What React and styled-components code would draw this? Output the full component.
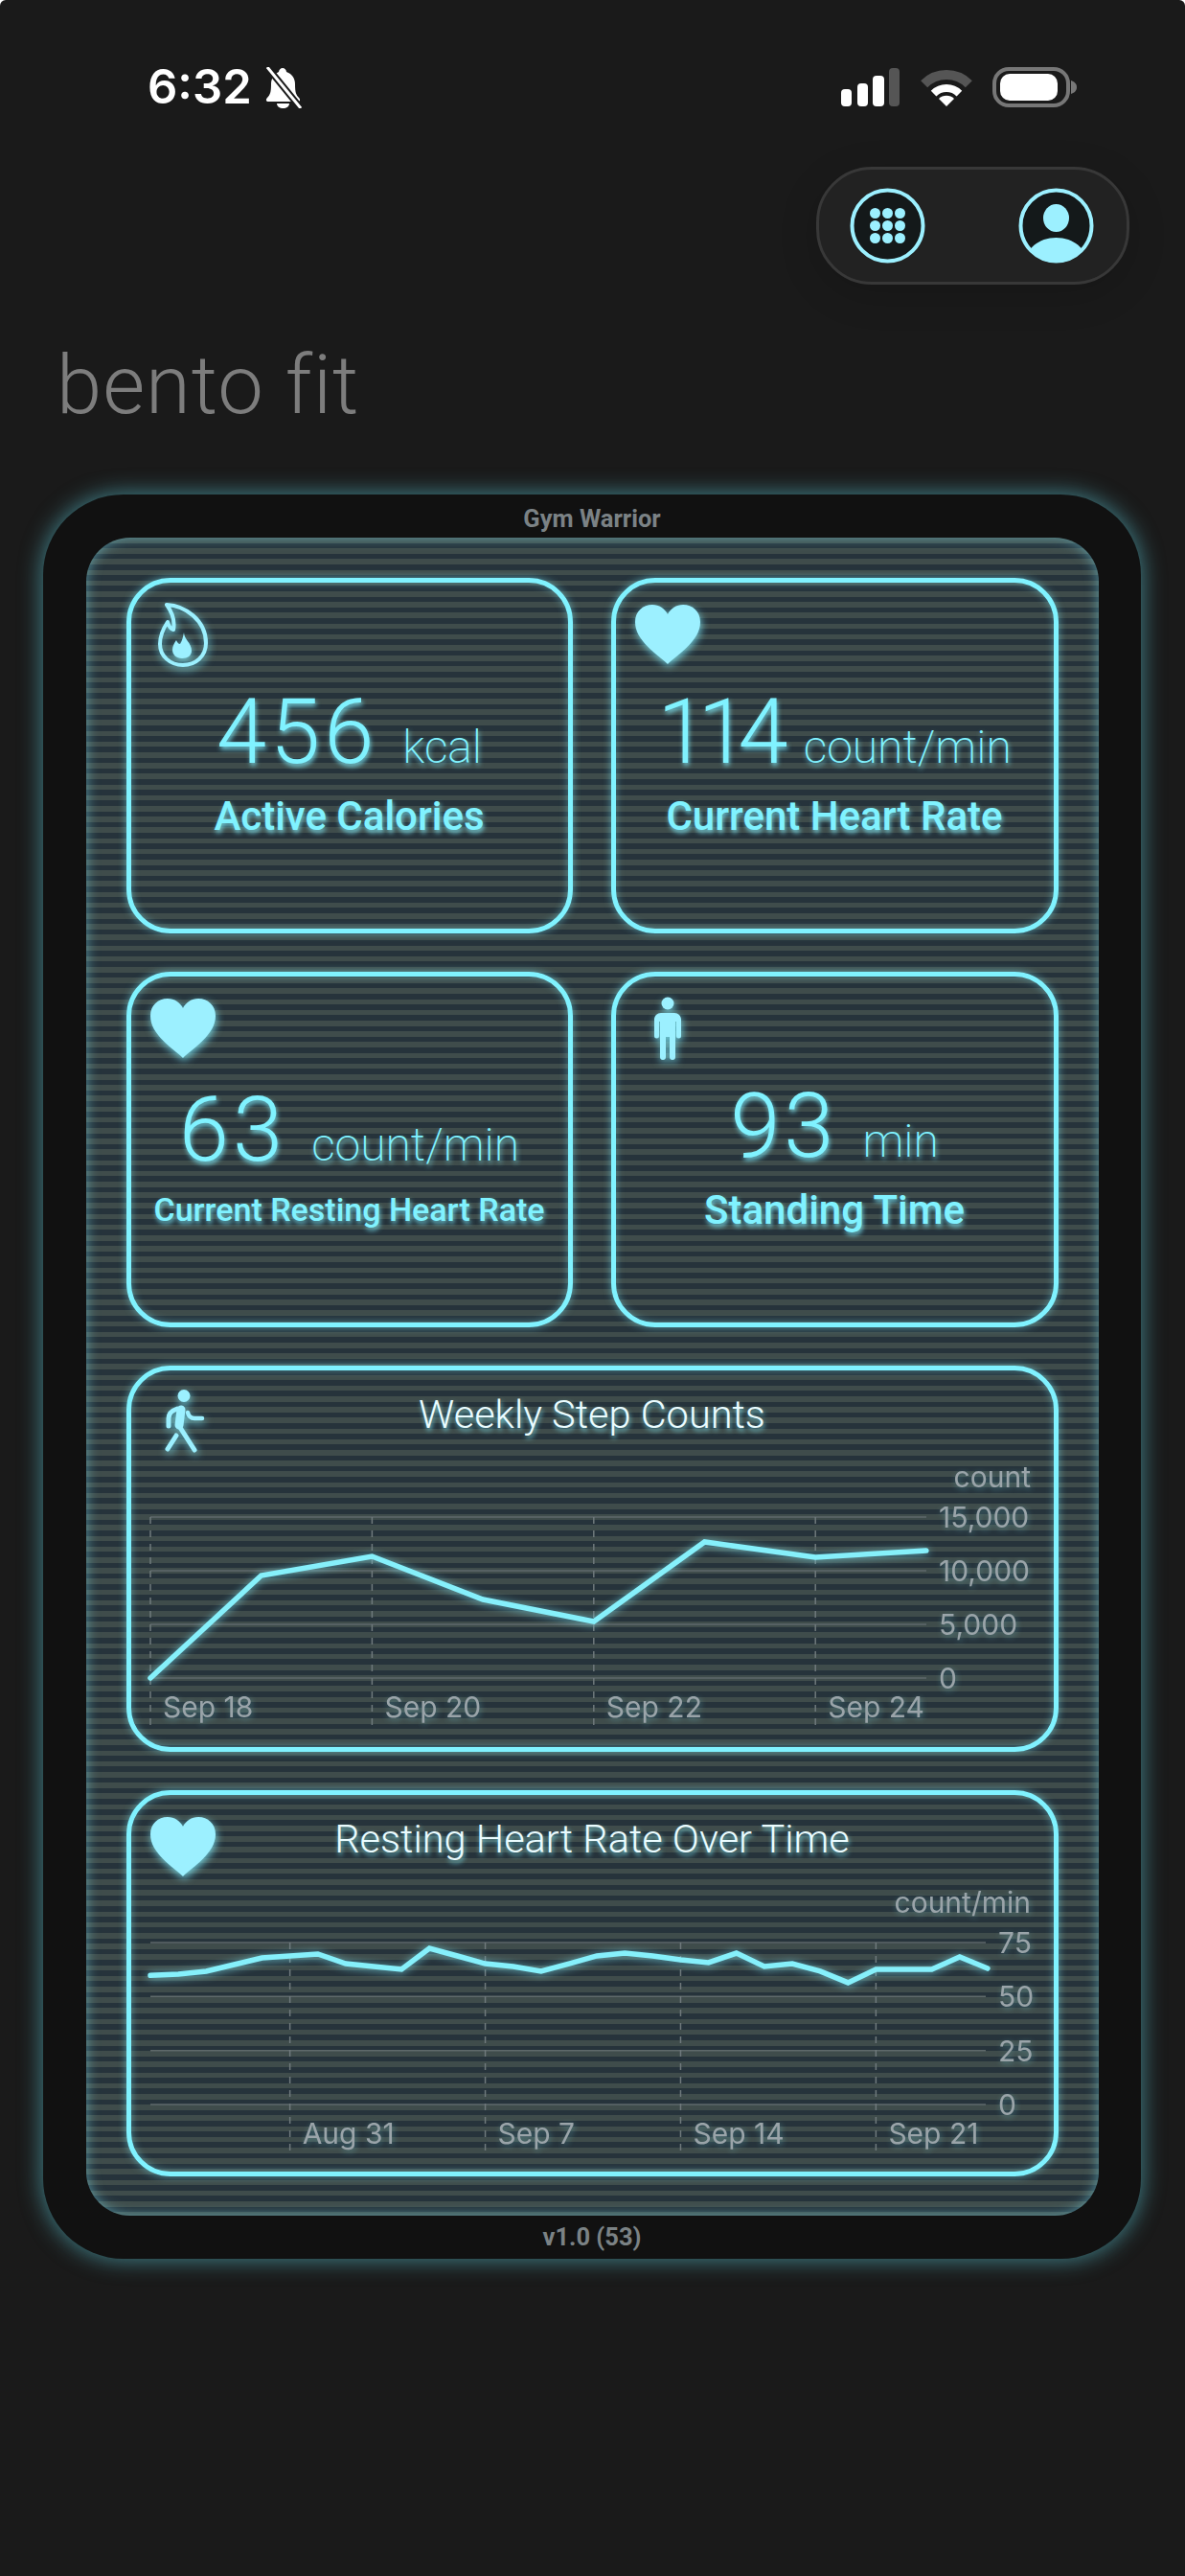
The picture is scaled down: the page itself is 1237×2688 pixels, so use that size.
import React from 'react'
import styled, { createGlobalStyle } from 'styled-components'

const CYAN = '#80f2ff'
const ICON = '#9cf0ff'
const GLOW = 'rgba(128, 240, 255, 0.8)'

const Global = createGlobalStyle`
  html, body { margin: 0; padding: 0; background: #fff; }
  body { font-family: Roboto, "Liberation Sans", sans-serif; }
`

const Page = styled.div`
  width: 1237px;
  height: 2688px;
  background: #1a1a1a;
  border-radius: 6px 6px 0 0;
  display: flex;
  flex-direction: column;
  overflow: hidden;
`

const StatusBar = styled.div`
  display: flex;
  align-items: center;
  justify-content: space-between;
  height: 44px;
  margin-top: 69px;
  padding: 0 113px 0 154px;
`

const TimeGroup = styled.div`
  display: flex;
  align-items: center;
  gap: 11px;
`

const Clock = styled.span`
  font-family: Inter, sans-serif;
  font-size: 49px;
  font-weight: 600;
  line-height: 44px;
  color: #fff;
`

const StatusIcons = styled.div`
  display: flex;
  align-items: center;
  gap: 21px;
`

const NavPill = styled.div`
  align-self: flex-end;
  box-sizing: border-box;
  display: flex;
  align-items: center;
  justify-content: space-between;
  width: 327px;
  height: 123px;
  margin: 61px 58px 0 0;
  padding: 0 34px 0 32px;
  background: #222;
  border: 3px solid #383838;
  border-radius: 58px;
  box-shadow: 0 10px 40px rgba(0, 0, 0, 0.15);
`

const Brand = styled.h1`
  margin: 55px 0 0 59px;
  font-size: 85px;
  font-weight: 300;
  letter-spacing: 1px;
  line-height: 100px;
  color: #7d7d7d;
`

const Frame = styled.div`
  box-sizing: border-box;
  display: flex;
  flex-direction: column;
  align-items: center;
  width: 1146px;
  height: 1841px;
  margin: 64px 0 0 45px;
  background: #111;
  border-radius: 84px;
  box-shadow: 0 0 22px 2px rgba(100, 220, 235, 0.5);
`

const FrameText = styled.div`
  height: 45px;
  font-size: 25.5px;
  font-weight: 700;
  line-height: ${(p) => p.$line}px;
  color: #7b8285;
`

const Screen = styled.div`
  box-sizing: border-box;
  display: grid;
  grid-template-columns: 466px 467px;
  grid-auto-rows: min-content;
  gap: 40px;
  width: 1057px;
  height: 1751px;
  padding: 42px;
  border-radius: 46px;
  background: repeating-linear-gradient(
    to bottom,
    #3f4c4b 0,
    #3f4c4b 5.6px,
    #26333b 5.6px,
    #26333b 11.2px
  );
  box-shadow: inset 0 0 14px rgba(130, 235, 250, 0.55);
`

const Panel = styled.section`
  position: relative;
  box-sizing: border-box;
  border: 5px solid ${CYAN};
  border-radius: 46px;
  box-shadow: 0 0 8px rgba(128, 240, 255, 0.55), inset 0 0 8px rgba(128, 240, 255, 0.45);
`

const StatCard = styled(Panel)`
  display: flex;
  flex-direction: column;
  align-items: center;
  height: 371px;
  padding-top: ${(p) => p.$top}px;
`

const ChartCard = styled(Panel)`
  grid-column: 1 / 3;
  height: 403px;
  padding-top: 26px;
  text-align: center;
`

const CardIcon = styled.svg`
  position: absolute;
  left: ${(p) => p.$left}px;
  top: ${(p) => p.$top}px;
  filter: drop-shadow(1px 3px 4px ${GLOW});
`

const ValueRow = styled.div`
  display: flex;
  align-items: baseline;
  justify-content: center;
  gap: 26px;
  color: ${CYAN};
  text-shadow: 1px 3px 5px ${GLOW};
`

const Value = styled.span`
  font-size: 94px;
  font-weight: 300;
  letter-spacing: ${(p) => p.$spacing ?? 4}px;
  line-height: 94px;
`

const Unit = styled.span`
  font-size: 48px;
  font-weight: 200;
  line-height: 48px;
`

const StatLabel = styled.div`
  margin-top: ${(p) => p.$gap}px;
  font-size: ${(p) => p.$size}px;
  font-weight: 500;
  line-height: 1;
  color: ${CYAN};
  text-shadow: 1px 3px 5px ${GLOW};
`

const ChartTitle = styled.h2`
  margin: 0;
  font-size: 41.5px;
  font-weight: 300;
  line-height: 40px;
  color: #eafcff;
  text-shadow: 1px 3px 5px ${GLOW};
`

const ChartSvg = styled.svg`
  display: block;
  margin: 27px 0 0 1px;
`

const GridLine = styled.line`
  stroke: #5f696b;
  stroke-width: 1.5;
`

const DashLine = styled.line`
  stroke: #6f797c;
  stroke-width: 1.5;
  stroke-dasharray: 7 7;
`

const DataLine = styled.polyline`
  fill: none;
  stroke: #86f0fb;
  stroke-width: 5.5;
  stroke-linecap: round;
  stroke-linejoin: miter;
  filter: drop-shadow(0 1px 4px rgba(128, 240, 255, 0.7));
`

const AxisText = styled.text`
  font-family: Inter, sans-serif;
  font-size: 30px;
  fill: #9aa4a9;
  filter: drop-shadow(1px 2px 3px rgba(128, 240, 255, 0.35));
`

const BellOff = () => (
  <svg width="43" height="43" viewBox="0 0 43 43">
    <path fill="#fff" d="M21 1c2 0 4 2 4 4 6 2 9 7 9 13 0 8 1 11 4 14 2 2 1 4-1 4H6c-2 0-3-2-1-4 3-3 4-6 4-14 0-6 3-11 8-13 0-2 2-4 4-4z" />
    <path fill="#fff" d="M15 38h13c0 3-3 5-6.500 5S15 41 15 38z" />
    <path stroke="#1a1a1a" strokeWidth="7" d="M5 0l35 43" />
    <path stroke="#fff" strokeWidth="3" d="M5 0l35 43" />
  </svg>
)

const Signal = () => (
  <svg width="62" height="40" viewBox="0 0 62 40">
    <rect x="0" y="22" width="11" height="18" rx="4" fill="#fff" />
    <rect x="17" y="16" width="11" height="24" rx="4" fill="#fff" />
    <rect x="33" y="8" width="12" height="32" rx="4" fill="#fff" />
    <rect x="50" y="0" width="11" height="40" rx="4" fill="#555" />
  </svg>
)

const Wifi = () => (
  <svg width="54" height="40" viewBox="0 0 54 40">
    <path fill="none" stroke="#555" strokeWidth="10" d="M3.700 16.700A33 33 0 0 1 50.300 16.700" />
    <path fill="none" stroke="#fff" strokeWidth="8" d="M13.600 26.600A19 19 0 0 1 40.400 26.600" />
    <path fill="#fff" d="M27 40L19 32A11.300 11.300 0 0 1 35 32Z" />
  </svg>
)

const Battery = () => (
  <svg width="88" height="42" viewBox="0 0 88 42">
    <rect x="2" y="2" width="77" height="38" rx="15" fill="none" stroke="#777" strokeWidth="4" />
    <rect x="8" y="7" width="60" height="28" rx="10" fill="#fff" />
    <path fill="#777" d="M82 14c3 1 6 3 6 7s-3 6-6 7z" />
  </svg>
)

const GridButton = () => (
  <svg width="79" height="79" viewBox="0 0 79 79">
    <circle cx="39.500" cy="39.500" r="37" fill="#14191a" stroke={ICON} strokeWidth="4" />
    {[26.500, 39.500, 52.500].flatMap((y) =>
      [26.500, 39.500, 52.500].map((x) => (
        <circle key={`${x}-${y}`} cx={x} cy={y} r="5.500" fill={ICON} />
      ))
    )}
  </svg>
)

const ProfileButton = () => (
  <svg width="79" height="79" viewBox="0 0 79 79">
    <circle cx="39.500" cy="39.500" r="37" fill="#14191a" stroke={ICON} strokeWidth="4" />
    <ellipse cx="39.500" cy="31.500" rx="13.500" ry="14.500" fill={ICON} />
    <path fill={ICON} d="M12 65C17 57 28 52 39.500 52C51 52 62 57 67 65C60 74 50 78 39.500 78C29 78 19 74 12 65Z" />
  </svg>
)

const Flame = () => (
  <CardIcon $left={28} $top={21} width="52" height="67" viewBox="0 0 52 67">
    <path fill="none" stroke={ICON} strokeWidth="4" strokeLinejoin="round" d="M9 2C28 3 50 18 50 42C50 56 39 65 26 65C13 65 2 56 2 43C2 33 6 26 10 20C11 24 13 27 16 28C18 18 14 9 9 2Z" />
    <path fill={ICON} d="M27 31C27 38 35 42 35 50C35 55 31 58 25 58C19 58 15 54 15 49C15 45 17 42 19 39C20 41 21 43 23 43C25 40 26 36 27 31Z" />
  </CardIcon>
)

const Heart = () => (
  <CardIcon $left={20} $top={23} width="68" height="62" viewBox="0 0 68 62">
    <path fill={ICON} d="M34 62C24 52 0 38 0 18C0 7 8 0 18 0C25 0 31 4 34 10C37 4 43 0 50 0C60 0 68 7 68 18C68 38 44 52 34 62Z" />
  </CardIcon>
)

const Standing = () => (
  <CardIcon $left={40} $top={21} width="28" height="66" viewBox="0 0 28 66">
    <circle cx="14" cy="7" r="6.500" fill={ICON} />
    <path fill={ICON} d="M7 17H21C25 17 28 20 28 24V41A2.500 2.500 0 0 1 23 41V26H22V63A3 3 0 0 1 16 63V42H12V63A3 3 0 0 1 6 63V26H5V41A2.500 2.500 0 0 1 0 41V24C0 20 3 17 7 17Z" />
  </CardIcon>
)

const Walking = () => (
  <CardIcon $left={35} $top={20} width="42" height="67" viewBox="0 0 42 67">
    <circle cx="20" cy="6.500" r="6.500" fill={ICON} />
    <g fill="none" stroke={ICON} strokeLinecap="round" strokeLinejoin="round">
      <path strokeWidth="9" d="M17 21L15 37" />
      <path strokeWidth="5" d="M13 20C7 22 4 26 4 30V38" />
      <path strokeWidth="4.500" d="M24 24C25 28 27 30 31 30H39" />
      <path strokeWidth="5" d="M15 38L31 63" />
      <path strokeWidth="5" d="M12 48L3 62" />
    </g>
  </CardIcon>
)

const Chart = ({ data, yMax, ticks, xTicks, unit, plot, step }) => {
  const { left, right, top, bottom, labelX } = plot
  const y = (v) => bottom - (v / yMax) * (bottom - top)
  const x = (i) => left + i * step
  return (
    <ChartSvg width="961" height="292" viewBox="0 0 961 292">
      <AxisText x="938" y={top - 31} textAnchor="end">{unit}</AxisText>
      {ticks.map((t) => (
        <g key={t}>
          <GridLine x1={left} x2={right} y1={y(t)} y2={y(t)} />
          <AxisText x={labelX} y={y(t) + 11}>{t.toLocaleString('en-US')}</AxisText>
        </g>
      ))}
      {xTicks.map(([i, label]) => (
        <g key={label}>
          <DashLine x1={x(i)} x2={x(i)} y1={top} y2={278} />
          <AxisText x={x(i) + 13} y={bottom + 41}>{label}</AxisText>
        </g>
      ))}
      <DataLine points={data.map((v, i) => `${x(i)},${y(v)}`).join(' ')} />
    </ChartSvg>
  )
}

const STEPS = [0, 9554, 11339, 7321, 5268, 12679, 11250, 11875]
const RESTING = [
  59.8, 60.4, 61.7, 64.8, 67.9, 68.8, 69.7, 65.2, 63.9, 62.6, 72.3, 68.8, 65.2, 63.9, 61.7, 65.2,
  68.8, 70.1, 68.8, 67, 65.7, 70.1, 63.9, 65.2, 61.7, 56.4, 62.6, 62.6, 62.6, 68.4, 63
]

const App = () => (
  <Page>
    <Global />
    <StatusBar>
      <TimeGroup>
        <Clock>6:32</Clock>
        <BellOff />
      </TimeGroup>
      <StatusIcons>
        <Signal />
        <Wifi />
        <Battery />
      </StatusIcons>
    </StatusBar>
    <NavPill>
      <GridButton />
      <ProfileButton />
    </NavPill>
    <Brand>bento fit</Brand>
    <Frame>
      <FrameText $line={50}>Gym Warrior</FrameText>
      <Screen>
        <StatCard $top={109}>
          <Flame />
          <ValueRow>
            <Value>456</Value>
            <Unit>kcal</Unit>
          </ValueRow>
          <StatLabel $gap={20} $size={42}>Active Calories</StatLabel>
        </StatCard>
        <StatCard $top={109}>
          <Heart />
          <ValueRow>
            <Value $spacing={-10}>114</Value>
            <Unit>count/min</Unit>
          </ValueRow>
          <StatLabel $gap={20} $size={42}>Current Heart Rate</StatLabel>
        </StatCard>
        <StatCard $top={113}>
          <Heart />
          <ValueRow>
            <Value>63</Value>
            <Unit>count/min</Unit>
          </ValueRow>
          <StatLabel $gap={19} $size={34}>Current Resting Heart Rate</StatLabel>
        </StatCard>
        <StatCard $top={109}>
          <Standing />
          <ValueRow>
            <Value>93</Value>
            <Unit>min</Unit>
          </ValueRow>
          <StatLabel $gap={20} $size={42}>Standing Time</StatLabel>
        </StatCard>
        <ChartCard>
          <Walking />
          <ChartTitle>Weekly Step Counts</ChartTitle>
          <Chart
            data={STEPS}
            yMax={15000}
            ticks={[0, 5000, 10000, 15000]}
            xTicks={[[0, 'Sep 18'], [2, 'Sep 20'], [4, 'Sep 22'], [6, 'Sep 24']]}
            unit="count"
            step={115.7}
            plot={{ left: 19, right: 829, top: 60, bottom: 228, labelX: 842 }}
          />
        </ChartCard>
        <ChartCard>
          <Heart />
          <ChartTitle>Resting Heart Rate Over Time</ChartTitle>
          <Chart
            data={RESTING}
            yMax={75}
            ticks={[0, 25, 50, 75]}
            xTicks={[[5, 'Aug 31'], [12, 'Sep 7'], [19, 'Sep 14'], [26, 'Sep 21']]}
            unit="count/min"
            step={29.13}
            plot={{ left: 19, right: 891, top: 61, bottom: 230, labelX: 904 }}
          />
        </ChartCard>
      </Screen>
      <FrameText $line={45}>v1.0 (53)</FrameText>
    </Frame>
  </Page>
)

export default App
